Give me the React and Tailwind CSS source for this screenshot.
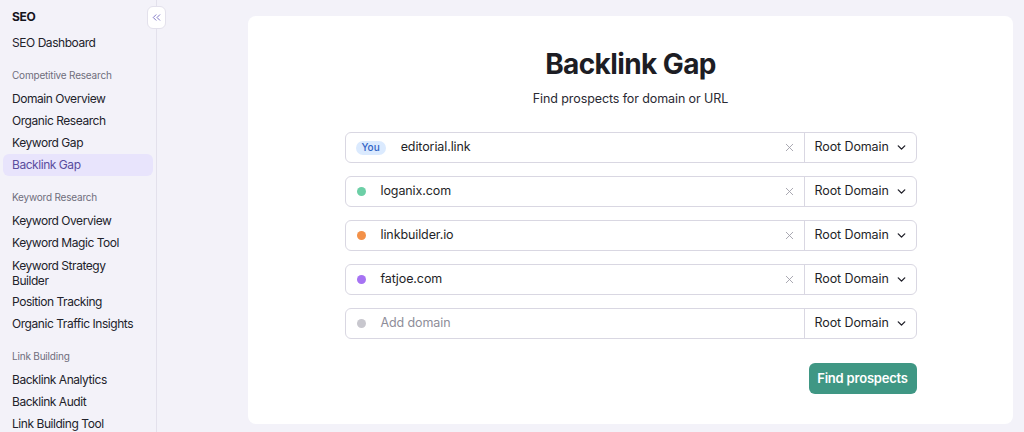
import React from 'react';
import { ChevronsLeft, ChevronDown, X } from 'lucide-react';

const sections = [
  {
    title: 'Competitive Research',
    items: ['Domain Overview', 'Organic Research', 'Keyword Gap', 'Backlink Gap'],
  },
  {
    title: 'Keyword Research',
    items: ['Keyword Overview', 'Keyword Magic Tool', 'Keyword Strategy Builder', 'Position Tracking', 'Organic Traffic Insights'],
  },
  {
    title: 'Link Building',
    items: ['Backlink Analytics', 'Backlink Audit', 'Link Building Tool'],
  },
];

const rows = [
  { you: true, value: 'editorial.link' },
  { dot: 'bg-[#6ccfa6]', value: 'loganix.com' },
  { dot: 'bg-[#f39149]', value: 'linkbuilder.io' },
  { dot: 'bg-[#a673f3]', value: 'fatjoe.com' },
  { dot: 'bg-[#c8c7ce]', value: '', placeholder: 'Add domain' },
];

const NavItem = ({ label }) => {
  const active = label === 'Backlink Gap';
  const twoLine = label === 'Keyword Strategy Builder';
  return (
    <div
      className={`mx-[3px] px-[9px] rounded-md flex items-center text-[12px] tracking-[-0.45px] whitespace-nowrap ${
        twoLine ? 'h-[37px] leading-[15px]' : 'h-[22px]'
      } ${active ? 'bg-[#e8e4fc] text-[#5a4d9e]' : 'text-[#22222b]'}`}
    >
      {twoLine ? (
        <span>
          Keyword Strategy
          <br />
          Builder
        </span>
      ) : (
        label
      )}
    </div>
  );
};

const DomainRow = ({ row }) => (
  <div className="flex h-[31px] rounded-md border border-[#d9d7e2] bg-white">
    <div className="flex-1 flex items-center pl-[10px] pr-[8px]">
      {row.you ? (
        <span className="px-[6px] h-[14px] flex items-center rounded-full bg-[#dbeafe] text-[#2f62c4] text-[10px] font-medium">You</span>
      ) : (
        <span className="ml-[1px] w-[9px] h-[9px] rounded-full flex">
          <span className={`w-full h-full rounded-full ${row.dot}`} />
        </span>
      )}
      <span
        className={`${row.you ? 'ml-[15px]' : 'ml-[15px]'} text-[12.5px] tracking-[-0.1px] ${
          row.value ? 'text-[#1f1f28]' : 'text-[#8e8d99]'
        }`}
      >
        {row.value || row.placeholder}
      </span>
      <span className="flex-1" />
      {row.value && <X size={13} strokeWidth={1.6} className="text-[#9c9ba6]" />}
    </div>
    <div className="w-[112px] border-l border-[#d9d7e2] flex items-center pl-[10px] text-[12.5px] tracking-[-0.1px] text-[#1f1f28]">
      Root Domain
      <ChevronDown size={13} strokeWidth={2.5} className="ml-[6px]" />
    </div>
  </div>
);

export default function App() {
  return (
    <div className="flex w-[1024px] h-[432px] overflow-hidden bg-[#f3f2f9] font-['Inter',sans-serif]">
      <aside className="relative w-[157px] shrink-0 border-r border-[#e3e1ec] pt-[6px]">
        <div className="h-[22px] px-[12px] flex items-center text-[12px] tracking-[-0.3px] font-bold text-[#15151d]">SEO</div>
        <div className="mt-[4px]">
          <NavItem label="SEO Dashboard" />
        </div>
        {sections.map((s) => (
          <div key={s.title} className="mt-[10px]">
            <div className="h-[22px] px-[12px] flex items-center text-[10px] tracking-[-0.2px] text-[#6f6e7c] mb-[2px]">{s.title}</div>
            {s.items.map((i) => (
              <NavItem key={i} label={i} />
            ))}
          </div>
        ))}
        <button className="absolute left-[147px] top-[6px] w-[19px] h-[23px] rounded-md bg-white border border-[#e3e1ec] flex items-center justify-center">
          <ChevronsLeft size={13} strokeWidth={1.6} className="text-[#6c63bd]" />
        </button>
      </aside>
      <main className="flex-1 pl-[91px] pr-[11px] pt-[16px]">
        <div className="h-[408px] bg-white rounded-lg flex flex-col items-center pt-[30px]">
          <h1 className="text-[28px] leading-[36px] font-bold text-[#1d1d24] tracking-[-0.6px]">Backlink Gap</h1>
          <p className="mt-[8px] text-[12.5px] leading-[18px] tracking-[-0.1px] text-[#2a2a33]">Find prospects for domain or URL</p>
          <div className="mt-[24px] w-[572px] flex flex-col gap-[13px]">
            {rows.map((r, i) => (
              <DomainRow key={i} row={r} />
            ))}
            <div className="flex justify-end mt-[11px]">
              <button className="h-[31px] w-[108px] rounded-md bg-[#3f9784] text-white text-[13px] font-semibold tracking-[-0.2px]">
                Find prospects
              </button>
            </div>
          </div>
        </div>
      </main>
    </div>
  );
}
